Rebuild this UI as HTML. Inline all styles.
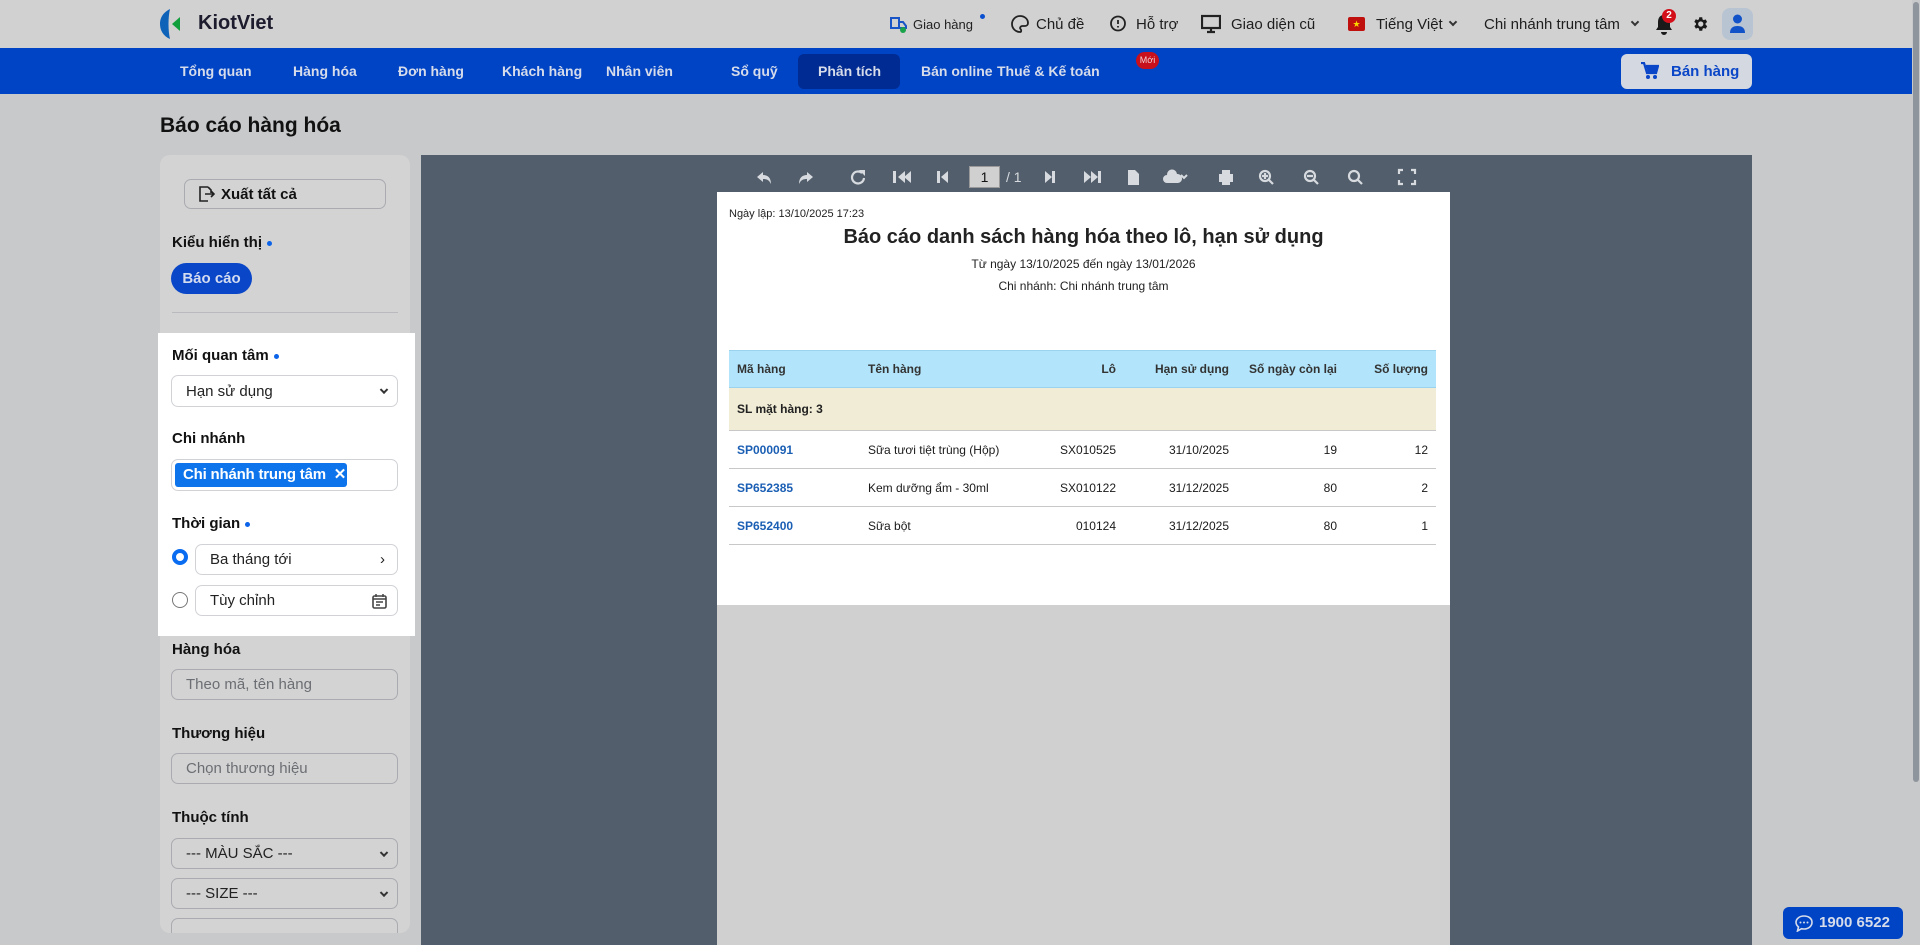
<!DOCTYPE html>
<html><head><meta charset="utf-8"><style>
*{box-sizing:border-box;margin:0;padding:0}
body{width:1920px;height:945px;overflow:hidden;background:#c8c9cb;font-family:"Liberation Sans",Arial,sans-serif;position:relative;color:#1a1a1a}
.a{position:absolute}
.hdr{left:0;top:0;width:1912px;height:48px;background:#d1d1d1}
.nav{left:0;top:48px;width:1912px;height:46px;background:#0044c6}
.nav span{position:absolute;top:15px;color:#d6dcea;font-size:14px;font-weight:bold;white-space:nowrap}
.hi{font-size:15px;top:16px;color:#1e1e1e}
.lbl{font-size:15px;font-weight:bold;color:#111}
.inp{border:1px solid #a9abb0;border-radius:7px;background:transparent;font-size:15px;color:#222;padding-left:14px;display:flex;align-items:center}
.w .inp{border-color:#d0d2d6}
.dot{display:inline-block;width:5px;height:5px;background:#0a63e8;border-radius:50%;margin-left:5px;vertical-align:middle}
.chev{position:absolute;right:10px;top:50%;width:7px;height:7px;border-right:2px solid #333;border-bottom:2px solid #333;transform:translateY(-70%) rotate(45deg)}
table{border-collapse:collapse;font-size:12px}
td{padding:0 8px}
</style></head><body>
<div class="a hdr"></div>
<svg class="a" style="left:160px;top:9px" width="34" height="30" viewBox="0 0 34 30"><path d="M10 0 C2 4 0 10 0 15 C0 21 3 27 10 30 C8 22 8 8 10 0Z" fill="#0e63b9"/><path d="M20 8 L12 15 L20 22Z" fill="#119f3e"/></svg>
<div class="a" style="left:198px;top:12px;font-size:20px;font-weight:bold;color:#1c1c2e">KiotViet</div>
<svg class="a" style="left:888px;top:14px" width="20" height="20" viewBox="0 0 20 20"><path d="M3 4h8v10H3z" fill="none" stroke="#1a55c8" stroke-width="2"/><path d="M11 8h4l3 4v2h-7" fill="none" stroke="#1a55c8" stroke-width="2"/><circle cx="15" cy="16" r="3" fill="#1aa34a"/></svg>
<div class="a" style="left:913px;top:17px;font-size:13px;color:#222">Giao hàng</div>
<div class="a" style="left:980px;top:14px;width:5px;height:5px;border-radius:50%;background:#0a4fd0"></div>
<svg class="a" style="left:1011px;top:15px" width="18" height="18" viewBox="0 0 18 18"><path d="M9 1a8 8 0 1 0 0 16c1.5 0 1.5-2 .5-3s0-3 2-3H14c2 0 3-1.5 3-3C17 4 13.5 1 9 1z" fill="none" stroke="#222" stroke-width="1.8"/></svg>
<div class="a hi" style="left:1036px">Chủ đề</div>
<svg class="a" style="left:1109px;top:15px" width="18" height="18" viewBox="0 0 18 18"><circle cx="9" cy="8.5" r="7" fill="none" stroke="#222" stroke-width="1.8"/><path d="M9 5v4M9 11v1.5" stroke="#222" stroke-width="1.8"/></svg>
<div class="a hi" style="left:1136px">Hỗ trợ</div>
<svg class="a" style="left:1201px;top:14px" width="20" height="20" viewBox="0 0 20 20"><rect x="1" y="2" width="18" height="12" fill="none" stroke="#222" stroke-width="2.2"/><path d="M10 14v4M6 18h8" stroke="#222" stroke-width="2.2"/></svg>
<div class="a hi" style="left:1231px">Giao diện cũ</div>
<div class="a" style="left:1348px;top:17px;width:17px;height:14px;background:#c0100e;border-radius:2px;color:#f8d400;font-size:9px;text-align:center;line-height:14px">★</div>
<div class="a hi" style="left:1376px">Tiếng Việt</div>
<div class="a" style="left:1450px;top:19px;width:6px;height:6px;border-right:2px solid #333;border-bottom:2px solid #333;transform:rotate(45deg)"></div>
<div class="a hi" style="left:1484px">Chi nhánh trung tâm</div>
<div class="a" style="left:1632px;top:19px;width:6px;height:6px;border-right:2px solid #333;border-bottom:2px solid #333;transform:rotate(45deg)"></div>
<svg class="a" style="left:1655px;top:13px" width="18" height="22" viewBox="0 0 18 22"><path d="M9 2c-4 0-6 3-6 7v5l-2 3h16l-2-3V9c0-4-2-7-6-7z M6 19a3 3 0 0 0 6 0z" fill="#1a1a1a"/></svg>
<div class="a" style="left:1662px;top:9px;width:14px;height:14px;border-radius:50%;background:#d30f1a;color:#fff;font-size:10px;font-weight:bold;text-align:center;line-height:14px">2</div>
<svg class="a" style="left:1691px;top:15px" width="18" height="18" viewBox="0 0 24 24"><path fill="#1a1a1a" d="M19.4 13a7.5 7.5 0 0 0 0-2l2.1-1.6-2-3.5-2.5 1a7 7 0 0 0-1.7-1L15 3h-4l-.4 2.7a7 7 0 0 0-1.7 1l-2.5-1-2 3.5L6.6 11a7.5 7.5 0 0 0 0 2l-2.1 1.6 2 3.5 2.5-1a7 7 0 0 0 1.7 1L11 21h4l.4-2.7a7 7 0 0 0 1.7-1l2.5 1 2-3.5zM13 15.5a3.5 3.5 0 1 1 0-7 3.5 3.5 0 0 1 0 7z"/></svg>
<div class="a" style="left:1722px;top:8px;width:31px;height:32px;border-radius:8px;background:#b9c4d2"></div>
<svg class="a" style="left:1729px;top:14px" width="17" height="20" viewBox="0 0 17 20"><circle cx="8.5" cy="5" r="4.5" fill="#1152c9"/><path d="M1 19c0-5 3-7 7.5-7s7.5 2 7.5 7z" fill="#1152c9"/></svg>
<div class="a nav">
<span style="left:180px">Tổng quan</span>
<span style="left:293px">Hàng hóa</span>
<span style="left:398px">Đơn hàng</span>
<span style="left:502px">Khách hàng</span>
<span style="left:606px">Nhân viên</span>
<span style="left:731px">Sổ quỹ</span>
<div class="a" style="left:798px;top:6px;width:102px;height:35px;background:#002b92;border-radius:6px"></div>
<span style="left:818px">Phân tích</span>
<span style="left:921px">Bán online</span>
<span style="left:997px">Thuế &amp; Kế toán</span>
<div class="a" style="left:1136px;top:4px;width:23px;height:17px;border-radius:9px;background:#c8101c;color:#f0d0d0;font-size:9px;text-align:center;line-height:17px">Mới</div>
<div class="a" style="left:1621px;top:6px;width:131px;height:35px;background:#d4d8e0;border-radius:6px"></div>
<svg class="a" style="left:1641px;top:14px" width="18" height="18" viewBox="0 0 18 18"><path d="M0 1h3l3 10h9l2-7H5" fill="none" stroke="#0a46c8" stroke-width="2.2"/><circle cx="7" cy="15" r="2" fill="#0a46c8"/><circle cx="14" cy="15" r="2" fill="#0a46c8"/><path d="M5 4h12l-2 7H7z" fill="#0a46c8"/></svg>
<span style="left:1671px;color:#0a46c8;font-size:15px">Bán hàng</span>
</div>
<div class="a" style="left:160px;top:114px;font-size:21px;font-weight:bold;color:#111">Báo cáo hàng hóa</div>
<div class="a" style="left:160px;top:155px;width:250px;height:778px;background:#d3d3d3;border-radius:10px"></div>
<div class="a" style="left:158px;top:333px;width:257px;height:303px;background:#fff"></div>
<div class="a inp" style="left:184px;top:179px;width:202px;height:30px;padding-left:12px;font-weight:bold;color:#111">
<svg width="18" height="18" viewBox="0 0 18 18" style="margin-right:6px"><path d="M11 2H3v14h8M11 2l3 3v3M8 9h9M14 6l3 3-3 3" fill="none" stroke="#222" stroke-width="1.6"/></svg>Xuất tất cả</div>
<div class="a lbl" style="left:172px;top:234px">Kiểu hiển thị<span class="dot"></span></div>
<div class="a" style="left:171px;top:263px;width:81px;height:31px;border-radius:16px;background:#0a46c8;color:#d4dcf0;font-size:15px;font-weight:bold;text-align:center;line-height:31px">Báo cáo</div>
<div class="a" style="left:172px;top:312px;width:226px;height:1px;background:#b8babd"></div>
<div class="w">
<div class="a lbl" style="left:172px;top:347px">Mối quan tâm<span class="dot"></span></div>
<div class="a inp" style="left:171px;top:375px;width:227px;height:32px">Hạn sử dụng<i class="chev" style="width:6px;height:6px"></i></div>
<div class="a lbl" style="left:172px;top:430px">Chi nhánh</div>
<div class="a inp" style="left:171px;top:459px;width:227px;height:32px;padding-left:3px"><div style="background:#0d74ec;color:#fff;font-weight:bold;font-size:15px;border-radius:3px;height:24px;line-height:24px;padding:0 8px;width:172px;white-space:nowrap;letter-spacing:-0.2px">Chi nhánh trung tâm &nbsp;✕</div></div>
<div class="a lbl" style="left:172px;top:515px">Thời gian<span class="dot"></span></div>
<div class="a" style="left:172px;top:549px;width:16px;height:16px;border-radius:50%;border:4px solid #0a6cf0"></div>
<div class="a inp" style="left:195px;top:544px;width:203px;height:31px">Ba tháng tới<span style="position:absolute;right:12px;font-size:15px">›</span></div>
<div class="a" style="left:172px;top:592px;width:16px;height:16px;border-radius:50%;border:1.5px solid #777"></div>
<div class="a inp" style="left:195px;top:585px;width:203px;height:31px">Tùy chỉnh
<svg style="position:absolute;right:10px" width="15" height="16" viewBox="0 0 15 16"><rect x="1" y="3" width="13" height="12" rx="1.5" fill="none" stroke="#444" stroke-width="1.6"/><path d="M4 1v3M11 1v3M1 6h13M4 9h7M4 12h4" stroke="#444" stroke-width="1.5"/></svg></div>
</div>
<div class="a lbl" style="left:172px;top:641px">Hàng hóa</div>
<div class="a inp" style="left:171px;top:669px;width:227px;height:31px;color:#6b6e73">Theo mã, tên hàng</div>
<div class="a lbl" style="left:172px;top:725px">Thương hiệu</div>
<div class="a inp" style="left:171px;top:753px;width:227px;height:31px;color:#6b6e73">Chọn thương hiệu</div>
<div class="a lbl" style="left:172px;top:809px">Thuộc tính</div>
<div class="a inp" style="left:171px;top:838px;width:227px;height:31px">--- MÀU SẮC ---<i class="chev" style="width:6px;height:6px"></i></div>
<div class="a inp" style="left:171px;top:878px;width:227px;height:31px">--- SIZE ---<i class="chev" style="width:6px;height:6px"></i></div>
<div class="a inp" style="left:171px;top:918px;width:227px;height:15px;border-bottom:none;border-radius:7px 7px 0 0"></div>
<div class="a" style="left:421px;top:155px;width:1331px;height:790px;background:#525e6b"></div>
<div class="a" style="left:717px;top:605px;width:733px;height:340px;background:#d0d0d0"></div>
<svg class="a" style="left:755px;top:168px" width="680" height="18" viewBox="0 0 680 18" fill="#d7dbe0" stroke="#d7dbe0">
<path d="M8 4 L2 9 L8 14 V11 C12 11 14 12 16 16 C16 10 13 7 8 7Z" stroke="none"/>
<path d="M52 4 L58 9 L52 14 V11 C48 11 46 12 44 16 C44 10 47 7 52 7Z" stroke="none"/>
<path d="M107 5a6 6 0 1 0 2 5" fill="none" stroke-width="2.2"/><path d="M104 2h6v6z" stroke="none"/>
<path d="M138 3h3v12h-3zM150 3v12l-7-6zM156 3v12l-7-6z" stroke="none"/>
<path d="M182 3h3v12h-3zM193 3v12l-7-6z" stroke="none"/>
<path d="M290 3v12l7-6zM297 3h3v12h-3z" stroke="none"/>
<path d="M329 3v12l7-6zM336 3v12l7-6zM343 3h3v12h-3z" stroke="none"/>
<path d="M373 2h7l4 4v11h-11z" stroke="none"/>
<path d="M416 15h-4a4 4 0 0 1 0-8 5 5 0 0 1 10-1 4 4 0 0 1 1 9h-3z" stroke="none"/><path d="M426 7l3 3 3-3" fill="none" stroke-width="2"/>
<path d="M467 2h8v4h-8zM464 6h14v8h-3v3h-8v-3h-3z" stroke="none"/>
<circle cx="510" cy="8" r="5" fill="none" stroke-width="2.2"/><path d="M514 12l4 4M510 5v6M507 8h6" stroke-width="2.2"/>
<circle cx="555" cy="8" r="5" fill="none" stroke-width="2.2"/><path d="M559 12l4 4M552 8h6" stroke-width="2.2"/>
<circle cx="599" cy="8" r="5" fill="none" stroke-width="2.2"/><path d="M603 12l4 4" stroke-width="2.2"/>
<path d="M644 6V2h4M656 2h4v4M660 12v4h-4M648 16h-4v-4" fill="none" stroke-width="2.2"/>
</svg>
<div class="a" style="left:969px;top:166px;width:31px;height:22px;background:#d0d0d0;border:1px solid #999;font-size:14px;text-align:center;line-height:20px;color:#111">1</div>
<div class="a" style="left:1006px;top:169px;font-size:14px;color:#d7dbe0">/ 1</div>
<div class="a" style="left:717px;top:192px;width:733px;height:413px;background:#fff"></div>
<div class="a" style="left:729px;top:208px;font-size:11px;color:#222">Ngày lập: 13/10/2025 17:23</div>
<div class="a" style="left:717px;top:226px;width:733px;text-align:center;font-size:20px;font-weight:bold;color:#222">Báo cáo danh sách hàng hóa theo lô, hạn sử dụng</div>
<div class="a" style="left:717px;top:257px;width:733px;text-align:center;font-size:12px;color:#222">Từ ngày 13/10/2025 đến ngày 13/01/2026</div>
<div class="a" style="left:717px;top:279px;width:733px;text-align:center;font-size:12px;color:#222">Chi nhánh: Chi nhánh trung tâm</div>
<table class="a" style="left:729px;top:350px;width:707px">
<tr style="height:37px;background:#b2e5fb;font-weight:bold;color:#333;border-top:1px solid #9bd3ee;border-bottom:1px solid #9bd3ee"><td style="width:131px">Mã hàng</td><td style="width:168px">Tên hàng</td><td style="text-align:right;width:96px">Lô</td><td style="text-align:right;width:113px">Hạn sử dụng</td><td style="text-align:right;width:108px">Số ngày còn lại</td><td style="text-align:right">Số lượng</td></tr>
<tr style="height:43px;background:#f1ecd6;font-weight:bold;color:#222;border-bottom:1px solid #c8c8c8"><td colspan="6">SL mặt hàng: 3</td></tr>
<tr style="height:38px;border-bottom:1px solid #c8c8c8"><td style="color:#1b5fb4;font-weight:bold">SP000091</td><td>Sữa tươi tiệt trùng (Hộp)</td><td style="text-align:right">SX010525</td><td style="text-align:right">31/10/2025</td><td style="text-align:right">19</td><td style="text-align:right">12</td></tr>
<tr style="height:38px;border-bottom:1px solid #c8c8c8"><td style="color:#1b5fb4;font-weight:bold">SP652385</td><td>Kem dưỡng ẩm - 30ml</td><td style="text-align:right">SX010122</td><td style="text-align:right">31/12/2025</td><td style="text-align:right">80</td><td style="text-align:right">2</td></tr>
<tr style="height:38px;border-bottom:1px solid #c8c8c8"><td style="color:#1b5fb4;font-weight:bold">SP652400</td><td>Sữa bột</td><td style="text-align:right">010124</td><td style="text-align:right">31/12/2025</td><td style="text-align:right">80</td><td style="text-align:right">1</td></tr>
</table>
<div class="a" style="left:1912px;top:0;width:8px;height:945px;background:#c8c9cb"></div>
<div class="a" style="left:1913px;top:2px;width:6px;height:780px;background:#8f959c;border-radius:3px"></div>
<div class="a" style="left:1783px;top:907px;width:120px;height:32px;background:#0044c6;border-radius:6px;color:#d6dcea;font-size:15px;font-weight:bold;line-height:32px;padding-left:36px">1900 6522</div>
<svg class="a" style="left:1795px;top:915px" width="18" height="17" viewBox="0 0 18 17"><path d="M9 1C4.5 1 1 3.8 1 7.3c0 1.9 1 3.5 2.5 4.7L2.5 16l4-2.3c.8.2 1.6.3 2.5.3 4.5 0 8-2.8 8-6.7S13.5 1 9 1z" fill="none" stroke="#d6dcea" stroke-width="1.6"/><circle cx="5.5" cy="7.5" r="1" fill="#d6dcea"/><circle cx="9" cy="7.5" r="1" fill="#d6dcea"/><circle cx="12.5" cy="7.5" r="1" fill="#d6dcea"/></svg>
</body></html>
